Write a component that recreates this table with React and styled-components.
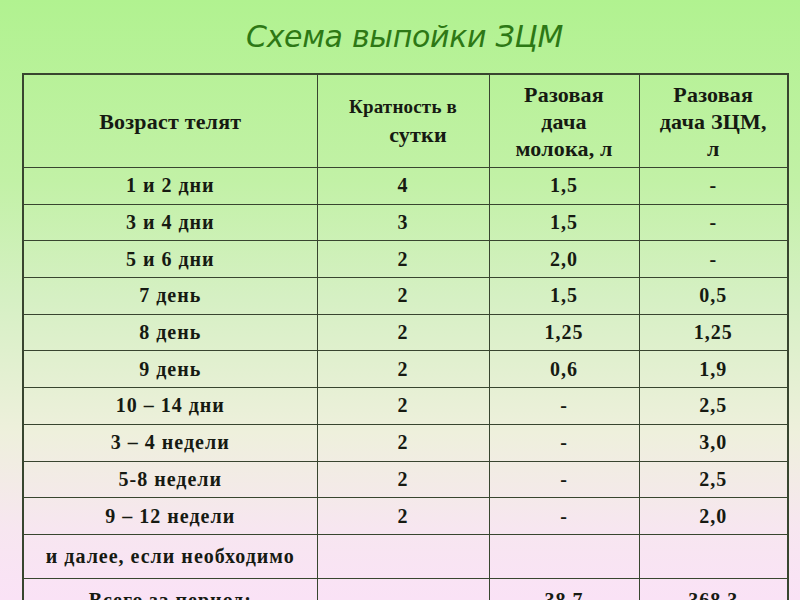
import styled, { createGlobalStyle } from "styled-components"

const Global = createGlobalStyle`
  html, body {
    margin: 0;
    padding: 0;
  }
  body {
    width: 800px;
    height: 600px;
    overflow: hidden;
    background: linear-gradient(180deg, #b1f290 0%, #c2f1a6 30%, #d6f0c4 50%, #eef0dc 72%, #f7e6f0 88%, #fae2f6 100%);
  }
`;

const rows = [
  ["1 и 2 дни", "4", "1,5", "-"],
  ["3 и 4 дни", "3", "1,5", "-"],
  ["5 и 6 дни", "2", "2,0", "-"],
  ["7 день", "2", "1,5", "0,5"],
  ["8 день", "2", "1,25", "1,25"],
  ["9 день", "2", "0,6", "1,9"],
  ["10 – 14 дни", "2", "-", "2,5"],
  ["3 – 4 недели", "2", "-", "3,0"],
  ["5-8 недели", "2", "-", "2,5"],
  ["9 – 12 недели", "2", "-", "2,0"],
];

const App = () => {
  return (
    <Page>
      <Global />
      <Title>Схема выпойки ЗЦМ</Title>
      <Table>
        <colgroup>
          <col style={{ width: 294 }} />
          <col style={{ width: 172 }} />
          <col style={{ width: 150 }} />
          <col style={{ width: 149 }} />
        </colgroup>
        <thead>
          <tr>
            <Head>Возраст телят</Head>
            <Head small>
              Кратность в<br />
              <Indent>сутки</Indent>
            </Head>
            <Head>
              Разовая<br />дача<br />молока, л
            </Head>
            <Head>
              Разовая<br />дача ЗЦМ,<br />л
            </Head>
          </tr>
        </thead>
        <tbody>
          {rows.map((r) => (
            <Row key={r[0]}>
              {r.map((c, i) => (
                <Cell key={i}>{c}</Cell>
              ))}
            </Row>
          ))}
          <Row tall>
            <Cell>и далее, если необходимо</Cell>
            <Cell />
            <Cell />
            <Cell />
          </Row>
          <Row tall>
            <Cell>Всего за период:</Cell>
            <Cell />
            <Cell>38,7</Cell>
            <Cell>368,3</Cell>
          </Row>
        </tbody>
      </Table>
    </Page>
  )
}

export default App

const Page = styled.div`
  width: 800px;
  height: 600px;
  overflow: hidden;
  padding: 0 0 0 22px;
  box-sizing: border-box;
`;

const Title = styled.h1`
  margin: 0;
  height: 73px;
  padding-top: 19px;
  box-sizing: border-box;
  width: 765px;
  text-align: center;
  font-family: "DejaVu Sans", Verdana, sans-serif;
  font-style: italic;
  font-weight: normal;
  font-size: 30px;
  line-height: 36px;
  letter-spacing: -0.3px;
  color: #2d7815;
`;

const Table = styled.table`
  width: 765px;
  border-collapse: collapse;
  table-layout: fixed;
  font-family: "Liberation Serif", "Times New Roman", serif;
  font-weight: bold;
  color: #161a12;
  border: 2px solid #38452f;
`;

const Head = styled.th`
  height: 92px;
  border: 1.5px solid #38452f;
  font-size: ${(p) => (p.small ? "19px" : "22px")};
  line-height: ${(p) => (p.small ? "28px" : "27px")};
  letter-spacing: 0.2px;
  text-align: center;
  padding: 0;
`;

const Indent = styled.span`
  padding-left: 30px;
  font-size: 22px;
`;

const Row = styled.tr`
  height: ${(p) => (p.tall ? "44px" : "36.7px")};
`;

const Cell = styled.td`
  border: 1.5px solid #38452f;
  text-align: center;
  padding: 0;
  font-size: 20px;
  letter-spacing: 1px;
  white-space: nowrap;
`;
